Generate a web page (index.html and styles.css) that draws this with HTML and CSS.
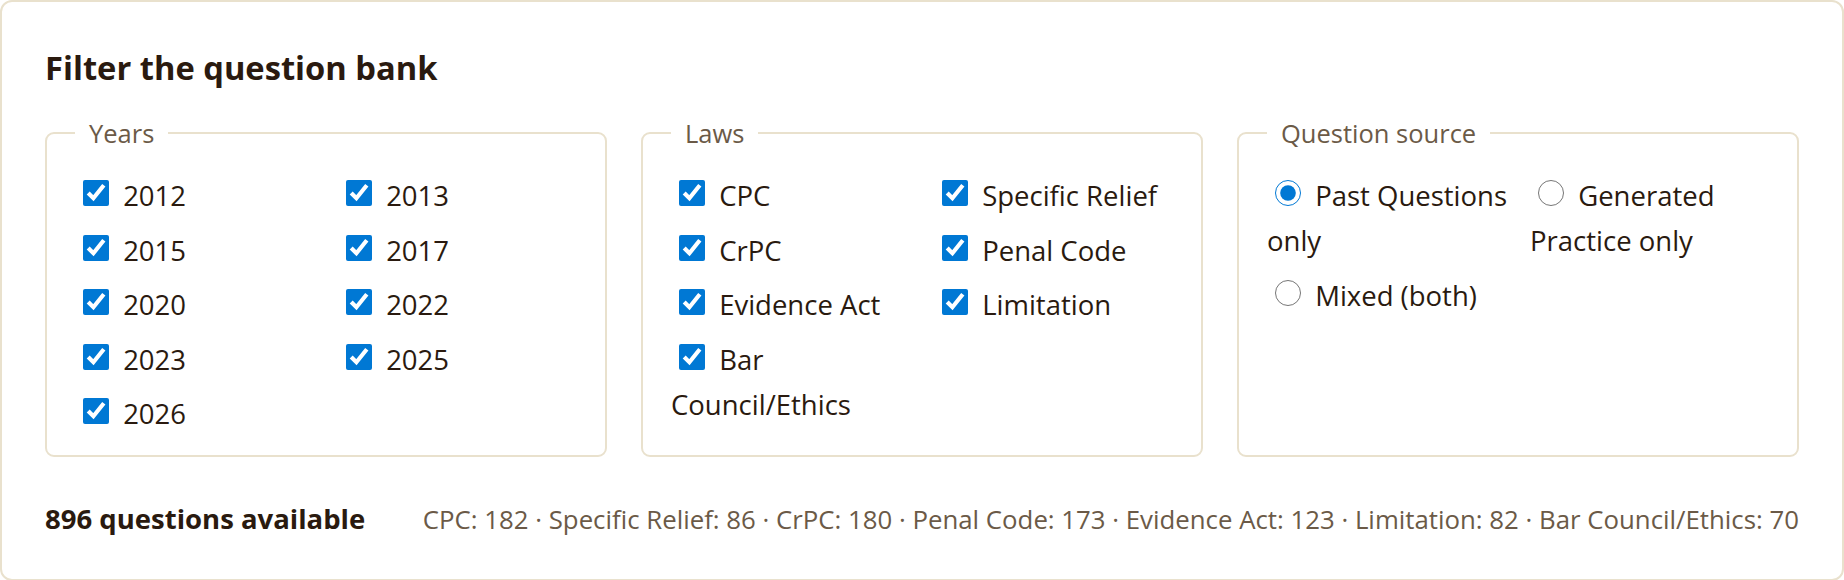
FILE: index.html
```html
<!DOCTYPE html>
<html lang="en">
<head>
  <meta charset="UTF-8">
  <meta name="viewport" content="width=device-width, initial-scale=1.0">
  <title>Question Bank Filter</title>
  <link rel="stylesheet" href="styles.css">
</head>
<body>

  <div class="card">
    <h2 class="card-title">Filter the question bank</h2>

    <div class="filters">
      <fieldset class="group">
        <legend>Years</legend>
        <div class="options">
          <label><input type="checkbox" checked> 2012</label>
          <label><input type="checkbox" checked> 2013</label>
          <label><input type="checkbox" checked> 2015</label>
          <label><input type="checkbox" checked> 2017</label>
          <label><input type="checkbox" checked> 2020</label>
          <label><input type="checkbox" checked> 2022</label>
          <label><input type="checkbox" checked> 2023</label>
          <label><input type="checkbox" checked> 2025</label>
          <label><input type="checkbox" checked> 2026</label>
        </div>
      </fieldset>

      <fieldset class="group">
        <legend>Laws</legend>
        <div class="options">
          <label><input type="checkbox" checked> CPC</label>
          <label><input type="checkbox" checked> Specific Relief</label>
          <label><input type="checkbox" checked> CrPC</label>
          <label><input type="checkbox" checked> Penal Code</label>
          <label><input type="checkbox" checked> Evidence Act</label>
          <label><input type="checkbox" checked> Limitation</label>
          <label><input type="checkbox" checked> Bar Council/Ethics</label>
        </div>
      </fieldset>

      <fieldset class="group">
        <legend>Question source</legend>
        <div class="options">
          <label><input type="radio" name="source" checked> Past Questions only</label>
          <label><input type="radio" name="source"> Generated Practice only</label>
          <label><input type="radio" name="source"> Mixed (both)</label>
        </div>
      </fieldset>
    </div>

    <div class="summary">
      <strong class="total">896 questions available</strong>
      <span class="breakdown">CPC: 182 · Specific Relief: 86 · CrPC: 180 · Penal Code: 173 · Evidence Act: 123 · Limitation: 82 · Bar Council/Ethics: 70</span>
    </div>
  </div>

</body>
</html>
```

FILE: styles.css
```css
body {
  font-family: "Segoe UI", "Open Sans", sans-serif;
  background-color: #fff;
  color: #2a1a0f;
  margin: 0;
  padding: 0;
}

.card {
  background-color: #fff;
  border: 2px solid #e9e1cd;
  border-radius: 12px;
  padding: 46px 43px 40px;
}

.card-title {
  font-size: 32.7px;
  line-height: 40px;
  font-weight: 700;
  margin: 0 0 24px;
}

.filters {
  display: grid;
  grid-template-columns: repeat(3, 1fr);
  gap: 34px;
}

.group {
  margin: 0;
  border: 2px solid #e9e1cd;
  border-radius: 9px;
  padding: 19px 24px 19px 28px;
  min-width: 0;
}

.group legend {
  padding: 0 14px;
  font-size: 25.5px;
  line-height: 42px;
  color: #6b5a47;
}

.options {
  display: grid;
  grid-template-columns: 1fr 1fr;
  column-gap: 20px;
  row-gap: 9.5px;
}

.options label {
  font-size: 27.5px;
  line-height: 45px;
}

.options input {
  width: 26px;
  height: 26px;
  margin: 0 7px 0 8px;
  accent-color: #0078d4;
  vertical-align: baseline;
}

.summary {
  display: flex;
  justify-content: space-between;
  align-items: baseline;
  margin-top: 42px;
  line-height: 40px;
}

.total {
  font-size: 27.5px;
  font-weight: 700;
}

.breakdown {
  font-size: 25.8px;
  color: #6b5a47;
}
```
